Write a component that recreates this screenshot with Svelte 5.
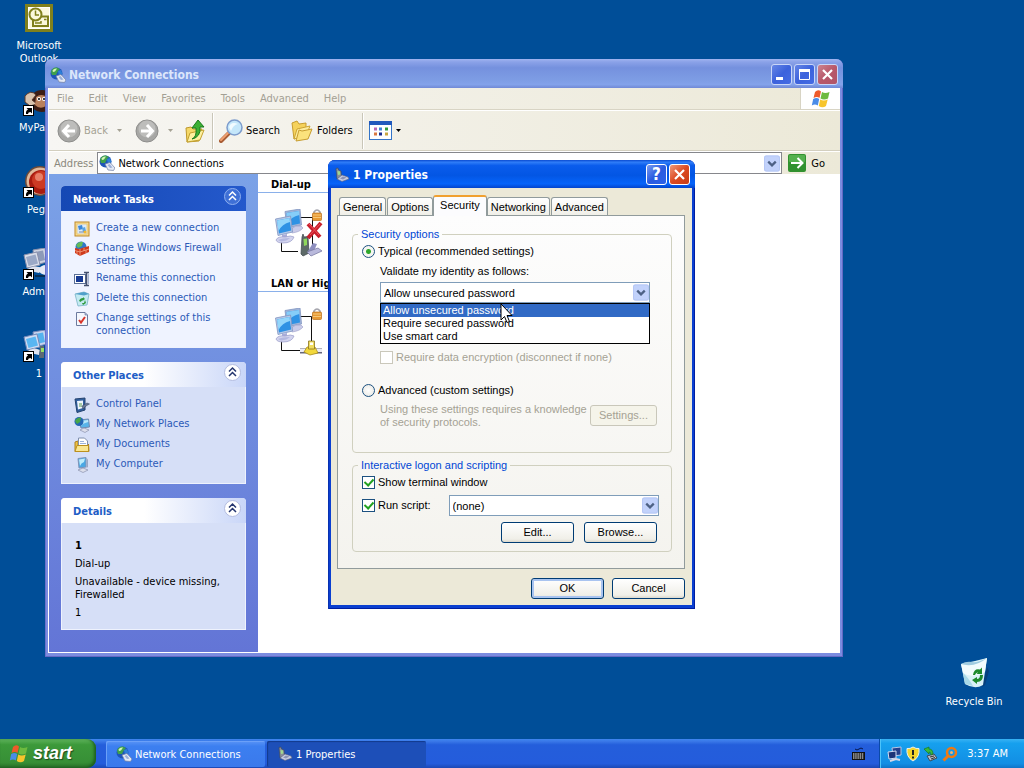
<script>
  const menus = ['File', 'Edit', 'View', 'Favorites', 'Tools', 'Advanced', 'Help'];
  const tasks = [
    { icon: 'create', label: 'Create a new connection' },
    { icon: 'firewall', label: 'Change Windows Firewall settings' },
    { icon: 'rename', label: 'Rename this connection' },
    { icon: 'bin', label: 'Delete this connection' },
    { icon: 'settings', label: 'Change settings of this connection' }
  ];
  const places = [
    { icon: 'control', label: 'Control Panel' },
    { icon: 'netplaces', label: 'My Network Places' },
    { icon: 'documents', label: 'My Documents' },
    { icon: 'computer', label: 'My Computer' }
  ];
  const tabs = ['General', 'Options', 'Security', 'Networking', 'Advanced'];
  const methods = ['Allow unsecured password', 'Require secured password', 'Use smart card'];
  let method = $state(methods[0]);
  let mode = $state('typical');
  let terminal = $state(true);
  let runScript = $state(true);
</script>

{#snippet globe(size)}
  <svg width={size} height={size} viewBox="0 0 16 16" aria-hidden="true">
    <circle cx="6.500" cy="6.500" r="6" fill="#1d55b8" />
    <path d="M1 5Q2 0 7 .5L10 2L8 4L6 8L2 8Z" fill="#3fa04c" />
    <path d="M2.500 3.500Q4 1 7 1.500L5 4.500L3 5Z" fill="#d2f4b4" />
    <path d="M8 4L11 3L12.500 7L9 9Z" fill="#2d7fd8" />
    <path d="M6 9L11 7.500L16 13L14.500 15.500L9 15Z" fill="#e4e9f4" stroke="#6f7da4" stroke-width=".7" />
    <path d="M8.500 10L10.500 9L13.500 12.500L11 13Z" fill="#9aaed8" />
  </svg>
{/snippet}

{#snippet phone()}
  <svg width="16" height="16" viewBox="0 0 16 16" aria-hidden="true">
    <path d="M2 1.500L4 1L4.500 3L7 4L7.500 10L3 12Z" fill="#8a8f98" stroke="#3a4658" stroke-width=".6" />
    <path d="M3.500 4L6 4.500L6.300 7.500L4 8Z" fill="#9fd890" />
    <path d="M3 12L8 8L14 10L15 12L8 14.500Z" fill="#c6cbe0" stroke="#59607e" stroke-width=".6" />
    <path d="M6 11.500L9 9.500L12.500 10.500L9 12.500Z" fill="#8b92b4" />
  </svg>
{/snippet}

{#snippet flag(size)}
  <svg width={size} height={size} viewBox="0 0 20 20" aria-hidden="true">
    <path d="M4 3Q7 0 10 2.500L8.500 9Q6 7 2.500 9Z" fill="#ee5a2a" />
    <path d="M11 3Q14 5 18.500 3L17 9.500Q13 11.500 9.500 9.500Z" fill="#6dba3f" />
    <path d="M2.200 10Q5.500 8 8.200 10L6.800 16.500Q4 14.500 .8 16.500Z" fill="#4a8ce8" />
    <path d="M9.200 10.500Q12.500 12.500 16.700 10.500L15 17Q11.500 19.500 7.800 17Z" fill="#f7c52c" />
  </svg>
{/snippet}

{#snippet chevron()}
  <svg class="chev" viewBox="0 0 17 17" aria-hidden="true">
    <rect width="17" height="17" rx="2" fill="#c2d2fb" />
    <rect x=".5" y=".5" width="16" height="16" rx="2" fill="none" stroke="#b4c6f4" />
    <path d="M4.500 6.500L8.500 10.500L12.500 6.500" fill="none" stroke="#4d6185" stroke-width="2.400" />
  </svg>
{/snippet}

{#snippet screens()}
  <path d="M11 2.500L26 0L27.500 16L13 19Z" fill="#9fb4da" stroke="#8094c0" stroke-width=".8" />
  <path d="M12.500 4L25 2L26 14.500L14 17Z" fill="#2f92e4" />
  <path d="M12.500 4L25 2L25.300 6Q17 8 13.500 14Z" fill="#86cdf8" />
  <path d="M17 20Q21 16 27 17L29 19Q26 23 18 24Z" fill="#c9cbe8" stroke="#9a9cc8" stroke-width=".6" />
  <path d="M1.500 10L16.500 7L18.500 23L4 26.500Z" fill="#b5c8e8" stroke="#8094c0" stroke-width=".8" />
  <path d="M3 11.500L15.500 9L17.200 21.500L5 24.500Z" fill="#2f92e4" />
  <path d="M3 11.500L15.500 9L16 13Q8 15 4.500 22Z" fill="#93d6fb" />
  <path d="M8 26L13 25V29H8Z" fill="#a9addb" />
  <path d="M2 31Q4 27 11 28Q17 26 20 28Q18 34 9 34Q3 34 2 31Z" fill="#d3d4ee" stroke="#9a9cc8" stroke-width=".7" />
  <path d="M4 31Q8 29 16 29Q13 32 7 32.500Z" fill="#b4b8e0" />
{/snippet}

{#snippet lock()}
  <path d="M40 5V3Q43 -1 46 3V5" fill="none" stroke="#a4a4ac" stroke-width="1.600" />
  <rect x="38.500" y="4" width="9" height="7.500" rx="1" fill="#e79a34" stroke="#b9701c" stroke-width=".7" />
  <path d="M39 6H47M39 8.500H47" stroke="#f8c878" />
{/snippet}

{#snippet arrowBadge()}
  <rect x=".5" y="21.500" width="10" height="10" fill="#fff" stroke="#000" />
  <path d="M3 30Q2.500 26.500 5 25.500L3.500 24H9V29.500L7.500 28Q5 28 5 30Z" fill="#000" />
{/snippet}

{#snippet smallIcon(name)}
  <svg class="small" width="16" height="16" viewBox="0 0 16 16" aria-hidden="true">
    {#if name === 'create'}
      <rect x="1" y="1" width="14" height="14" fill="#f6dc94" stroke="#c08a28" />
      <rect x="3" y="3" width="10" height="10" fill="#dceaf8" stroke="#e8b850" stroke-width=".6" />
      <path d="M4 5L8 4L9 8L5 9Z" fill="#3d87d8" /><path d="M8 7L11 6L12 10L9 11Z" fill="#5aa4e4" />
      <path d="M5 11H10" stroke="#7888a8" /><circle cx="11" cy="11" r="1.500" fill="#f4b82c" />
    {:else if name === 'firewall'}
      <circle cx="7" cy="6" r="5.500" fill="#2f78c8" /><path d="M2 4Q5 0 9 1L8 5L4 7Z" fill="#62bb5a" />
      <path d="M1 7L5 8L15 5V11L6 15L1 12Z" fill="#cf3a1c" />
      <path d="M1 9.500L6 11L15 8M6 8V15M10 7V10M12 9V12M3 10V13" stroke="#f8b090" stroke-width=".7" fill="none" />
    {:else if name === 'rename'}
      <rect x=".5" y="3.500" width="11" height="9" fill="#fff" stroke="#5b6f96" /><rect x="2" y="5" width="7" height="6" fill="#173a93" />
      <path d="M10 1.500H15M12.500 1.500V14.500M10 14.500H15" stroke="#44506e" stroke-width="1.600" /><path d="M14.500 3V13" stroke="#a6b3d0" />
    {:else if name === 'bin'}
      <path d="M1 3L10 1L15 3L13 14L4 15Z" fill="#c4eaf2" stroke="#79b2c6" stroke-width=".8" /><path d="M1 3L10 4.500L15 3L10 1Z" fill="#4f9fca" />
      <path d="M5 10Q6 7 9 7L9 6L11 8L9 9.500Q7 9 7 11ZM11 9L12 12L9 14L8 12L10 12Z" fill="#2e9a3e" />
    {:else if name === 'settings'}
      <path d="M2.500 1.500H11L13.500 4V14.500H2.500Z" fill="#f4f7fd" stroke="#6c7a9e" /><path d="M13.500 4H11V1.500" fill="#a9b8da" stroke="#6c7a9e" stroke-width=".7" />
      <path d="M5 9L7 11.500L11 6" fill="none" stroke="#d8342a" stroke-width="2" />
    {:else if name === 'control'}
      <path d="M1 2L11 1V13L3 15.500Z" fill="#315f9e" stroke="#24436f" /><path d="M3 4L9 3.500V11L4 12.500Z" fill="#eef5fc" />
      <path d="M5 7H8M5 9H8" stroke="#5b9a50" /><path d="M8 9L13 6L15.500 7L12 9L9 12Z" fill="#6a7896" stroke="#344562" stroke-width=".5" />
    {:else if name === 'netplaces'}
      <path d="M5 3L14.500 2L15.500 10L7 11Z" fill="#58b4ea" stroke="#7089b0" /><path d="M6 4L14 3L14.300 5Q9 6 7 9Z" fill="#b9e7fa" />
      <circle cx="5" cy="4.500" r="4.500" fill="#2467b4" /><path d="M1 4Q3 0 7 .5L6 5L3 7Z" fill="#46a648" />
      <path d="M6 13L10 11L15 13L11 15.500Z" fill="#dcdfec" stroke="#8a90ae" stroke-width=".7" />
    {:else if name === 'documents'}
      <path d="M1 5L4 4V14H14.500V7L15 14.500H1Z" fill="#edc248" stroke="#b0821c" />
      <path d="M4.500 1H10.500L13.500 4V10H4.500Z" fill="#fff" stroke="#8190ae" /><path d="M6 4.500H10M6 6.500H12" stroke="#9db3da" />
      <path d="M1 14.500L3 8.500H14.500V14.500Z" fill="#fae690" stroke="#bb901e" />
    {:else}
      <path d="M4 1.500L12 .5V10L5 11Z" fill="#4aa8e4" stroke="#7f94b8" /><path d="M5 2.500L11 1.500L10 5Q7 6 6 9Z" fill="#bdecfb" />
      <path d="M12.500 1L14 2.500V10L12.500 11Z" fill="#9aa7c4" /><path d="M4 13L9 11L14 13L9 15.500Z" fill="#dcdfeb" stroke="#8a90ae" stroke-width=".7" />
    {/if}
  </svg>
{/snippet}

{#snippet collapse(title)}
  <button class="collapse" aria-label="Collapse {title}">
    <svg width="19" height="19" viewBox="0 0 19 19" aria-hidden="true">
      <circle class="ring" cx="9.500" cy="9.500" r="8" />
      <path class="arrows" d="M6 8.500L9.500 5L13 8.500M6 13L9.500 9.500L13 13" />
    </svg>
  </button>
{/snippet}

{#snippet closeGlyph()}
  <svg width="13" height="13" viewBox="0 0 13 13" aria-hidden="true"><path d="M2 2L11 11M11 2L2 11" stroke="#fff" stroke-width="2.200" /></svg>
{/snippet}

<div class="screen">
  <main class="desktop">
    <a class="shortcut outlook" href="#outlook">
      <svg width="28" height="28" viewBox="0 0 28 28" aria-hidden="true">
        <rect width="28" height="28" fill="#80801c" /><rect x="3" y="3" width="22" height="22" fill="#fff" />
        <rect x="4" y="4" width="20" height="20" fill="#fbf8dc" />
        <path d="M13 12.500H23V22H8V16" fill="none" stroke="#80801c" stroke-width="2" />
        <circle cx="10.500" cy="10.500" r="6" fill="#fbf8dc" stroke="#80801c" stroke-width="2" /><path d="M10.500 6.500V11H14" stroke="#80801c" stroke-width="1.500" fill="none" />
        <path d="M10 19H16V17M19 15.500H21.500" fill="none" stroke="#80801c" stroke-width="1.500" />
      </svg>
      <span>Microsoft Outlook</span>
    </a>
    <a class="shortcut clipped mypa" href="#mypa">
      <svg width="32" height="32" viewBox="0 0 32 32" aria-hidden="true">
        <ellipse cx="19" cy="17" rx="12" ry="11" fill="#3c1d14" /><path d="M2 12Q8 5 13 11L9 16L14 20L7 22L2 18Z" fill="#d8c3ae" stroke="#5a3a2c" />
        <path d="M13 13Q18 9 24 13L23 22Q17 26 12 21Z" fill="#b9805c" /><circle cx="16" cy="15" r="2" fill="#fff" /><circle cx="21" cy="15" r="2" fill="#fff" /><circle cx="16" cy="15" r="1" /><circle cx="21" cy="15" r="1" />
        {@render arrowBadge()}
      </svg>
      <span>MyPa</span>
    </a>
    <a class="shortcut clipped peg" href="#peg">
      <svg width="32" height="32" viewBox="0 0 32 32" aria-hidden="true">
        <circle cx="17" cy="15" r="15" fill="#6c4a38" /><circle cx="17" cy="15" r="13.500" fill="#e0b89a" /><circle cx="18" cy="16" r="12" fill="#a81c10" />
        <circle cx="18" cy="14" r="9" fill="#cc3a24" /><circle cx="16" cy="11" r="4" fill="#e88068" />
        {@render arrowBadge()}
      </svg>
      <span>Peg</span>
    </a>
    <a class="shortcut clipped adm" href="#adm">
      <svg width="32" height="32" viewBox="0 0 32 32" aria-hidden="true">
        <path d="M10 2L22 0L24 14L12 17Z" fill="#cfd3e0" stroke="#8a90ac" /><path d="M12 4L20 2.500L22 12L14 14Z" fill="#8d9ab8" />
        <path d="M1 7L14 4L17 17L4 20Z" fill="#dadeea" stroke="#8a90ac" /><path d="M3 9L12.500 6.500L15 15.500L5.500 18Z" fill="#9aa8c6" />
        <path d="M3 22Q10 16 20 20L16 25Z" fill="#dfe2ee" /><ellipse cx="23" cy="22" rx="7" ry="5" fill="#e8eaf4" /><path d="M12 28H24V22" fill="none" stroke="#111" />
        {@render arrowBadge()}
      </svg>
      <span>Adm</span>
    </a>
    <a class="shortcut one" href="#one">
      <svg width="32" height="32" viewBox="0 0 32 32" aria-hidden="true">
        <path d="M10 2L22 0L24 14L12 17Z" fill="#c6d4ee" stroke="#7688b8" /><path d="M12 4L20 2.500L22 12L14 14Z" fill="#55b2ee" />
        <path d="M1 7L14 4L17 17L4 20Z" fill="#d0dcf2" stroke="#7688b8" /><path d="M3 9L12.500 6.500L15 15.500L5.500 18Z" fill="#5ab6f2" />
        <path d="M3 22Q10 16 17 20L16 25Z" fill="#dfe2ee" /><path d="M17 16H21V28H16Z" fill="#5d6a74" /><path d="M18 18H21V22H18Z" fill="#9adf62" />
        {@render arrowBadge()}
      </svg>
      <span>1</span>
    </a>
    <a class="shortcut recycle" href="#recycle">
      <svg width="32" height="32" viewBox="0 0 32 32" aria-hidden="true">
        <path d="M24 30L29 10L31 14L27 28Z" fill="#063f7c" />
        <path d="M3 7L17 4L29 1L25 28Q17 33 7 27Z" fill="#d9f1f7" /><path d="M3 7Q13 11 29 1L27 15Q14 22 5 16Z" fill="#f1fbfd" />
        <path d="M3 7Q8 4 14 5Q20 6 29 1Q17 11 3 7Z" fill="#9fcbe0" /><path d="M7 27L5 16Q10 20 15 29Z" fill="#a8d9e8" />
        <path d="M15 18Q16 11 22 12.500L24 10.500V17H18.500L20 15.500Q18 15 17 18ZM25 18Q25 25 19 25V27L14 23L19 20V22Q22 22 22 18Z" fill="#1d8a2c" />
      </svg>
      <span>Recycle Bin</span>
    </a>

    <section class="explorer" aria-label="Network Connections">
      <header class="titlebar">
        {@render globe(16)}
        <h1>Network Connections</h1>
        <button class="cap blue" aria-label="Minimize"><svg width="13" height="13" viewBox="0 0 13 13" aria-hidden="true"><path d="M1 10.500H8" stroke="#fff" stroke-width="3" /></svg></button>
        <button class="cap blue" aria-label="Maximize"><svg width="13" height="13" viewBox="0 0 13 13" aria-hidden="true"><path d="M1.500 2V11.500H11.500V2" stroke="#fff" fill="none" /><path d="M1 2.500H12" stroke="#fff" stroke-width="3" /></svg></button>
        <button class="cap red" aria-label="Close">{@render closeGlyph()}</button>
      </header>
      <div class="client">
        <nav class="menubar">
          {#each menus as m}<button>{m}</button>{/each}
          <span class="brand">{@render flag(20)}</span>
        </nav>
        <div class="toolbar">
          <button class="tool dim">
            <svg width="24" height="24" viewBox="0 0 24 24" aria-hidden="true"><circle cx="12" cy="12" r="11" fill="#a7a7a5" stroke="#8e8e8c" /><circle cx="12" cy="10" r="8.500" fill="#bdbdbb" /><path d="M18 12H7M12 6L6.500 12L12 18" fill="none" stroke="#fff" stroke-width="3" /></svg>
            <span>Back</span>
          </button>
          <button class="drop" aria-label="Back history"><svg width="5" height="3" viewBox="0 0 5 3" aria-hidden="true"><path d="M0 0H5L2.500 3Z" fill="#a5a294" /></svg></button>
          <button class="tool" aria-label="Forward">
            <svg width="24" height="24" viewBox="0 0 24 24" aria-hidden="true"><circle cx="12" cy="12" r="11" fill="#a7a7a5" stroke="#8e8e8c" /><circle cx="12" cy="10" r="8.500" fill="#bdbdbb" /><path d="M6 12H17M12 6L17.500 12L12 18" fill="none" stroke="#fff" stroke-width="3" /></svg>
          </button>
          <button class="drop" aria-label="Forward history"><svg width="5" height="3" viewBox="0 0 5 3" aria-hidden="true"><path d="M0 0H5L2.500 3Z" fill="#a5a294" /></svg></button>
          <button class="tool up" aria-label="Up">
            <svg width="22" height="24" viewBox="0 0 22 24" aria-hidden="true"><path d="M2 9L7 8L9 10H18L15 22L3 23Z" fill="#f5d868" stroke="#bd982a" /><path d="M3 23L6 14L20 11L16 21Z" fill="#fdf0a0" stroke="#c4a232" /><path d="M8 20Q13 18 12 9H8L14 1L20 8H16Q17 18 8 20Z" fill="#3cb034" stroke="#1a7a1c" /></svg>
          </button>
          <i class="sep"></i>
          <button class="tool">
            <svg width="24" height="24" viewBox="0 0 24 24" aria-hidden="true"><path d="M2 22L10 14" stroke="#a85c34" stroke-width="4" stroke-linecap="round" /><path d="M2 21L9 14" stroke="#f0a070" stroke-width="2" stroke-linecap="round" /><circle cx="15.500" cy="8.500" r="7.500" fill="#c5e7fa" stroke="#7d9ccc" stroke-width="1.500" /><path d="M10 8Q12 2 19 5Q14 6 12 12Z" fill="#f2fbff" /></svg>
            <span>Search</span>
          </button>
          <button class="tool folders">
            <svg width="24" height="24" viewBox="0 0 24 24" aria-hidden="true"><path d="M2 4L7 2L9 5L16 4V15L4 20Z" fill="#f5d25c" stroke="#c79d30" /><path d="M4 20L7 10L20 7L16 17Z" fill="#fdec9c" stroke="#cba434" /><path d="M6 22L9 11L12 12L22 10L18 20Z" fill="#fbe27c" stroke="#c79d30" /></svg>
            <span>Folders</span>
          </button>
          <i class="sep"></i>
          <button class="tool" aria-label="Views">
            <svg width="24" height="20" viewBox="0 0 24 20" aria-hidden="true"><rect x=".5" y=".5" width="22" height="18" fill="#fdfeff" stroke="#3374c8" /><path d="M0 0H23V4H0Z" fill="#2058bc" /><path d="M5 8H8" stroke="#b668b4" stroke-width="3" /><path d="M5 13H8" stroke="#d87840" stroke-width="3" /><path d="M10 8H13" stroke="#3c84d8" stroke-width="3" /><path d="M10 13H13" stroke="#182c90" stroke-width="3" /><path d="M16 8H19" stroke="#2f9a3a" stroke-width="3" /><path d="M16 13H19" stroke="#c9a640" stroke-width="3" /></svg>
            <svg width="5" height="3" viewBox="0 0 5 3" aria-hidden="true"><path d="M0 0H5L2.500 3Z" fill="#000" /></svg>
          </button>
        </div>
        <div class="addressbar">
          <label for="address">Address</label>
          <div class="addrbox">
            {@render globe(16)}
            <input id="address" value="Network Connections" />
            {@render chevron()}
          </div>
          <button class="go">
            <svg width="18" height="18" viewBox="0 0 18 18" aria-hidden="true"><rect width="18" height="18" rx="2" fill="#31912f" /><rect x="1" y="1" width="16" height="7" rx="1" fill="#54b04e" /><path d="M3 9H14M9.500 4L14.500 9L9.500 14" stroke="#fff" stroke-width="2" fill="none" /></svg>
            <span>Go</span>
          </button>
        </div>
        <div class="content">
          <aside>
            <section class="box primary">
              <header><h2>Network Tasks</h2>{@render collapse('Network Tasks')}</header>
              <ul>{#each tasks as t}<li><a href="#{t.icon}">{@render smallIcon(t.icon)}<span>{t.label}</span></a></li>{/each}</ul>
            </section>
            <section class="box">
              <header><h2>Other Places</h2>{@render collapse('Other Places')}</header>
              <ul>{#each places as p}<li><a href="#{p.icon}">{@render smallIcon(p.icon)}<span>{p.label}</span></a></li>{/each}</ul>
            </section>
            <section class="box">
              <header><h2>Details</h2>{@render collapse('Details')}</header>
              <div class="details">
                <p><b>1</b></p><p>Dial-up</p><p>Unavailable - device missing, Firewalled</p><p>1</p>
              </div>
            </section>
          </aside>
          <div class="files">
            <h3>Dial-up</h3>
            <div class="conn">
              <svg width="50" height="50" viewBox="0 0 50 50" aria-hidden="true">
                <path d="M26 8.500H38.500V40M7.500 33V42.500H24" stroke="#111" fill="none" />
                {@render screens()}{@render lock()}
                <path d="M28 28L29 25L30 28L34 27.500L35 44L29 47L27 45Z" fill="#5d6a68" stroke="#3a4448" stroke-width=".7" /><path d="M29.500 30L33 29.500V36L30 37Z" fill="#8ed85c" />
                <path d="M34 42L39 34L43 35L40 42Z" fill="#8f90c0" /><path d="M33 43L44 39L48 42L37 47Z" fill="#b9b9dc" stroke="#7c7ca4" stroke-width=".8" />
                <path d="M34 15L46 28M47 14L34 29" stroke="#c8202c" stroke-width="4" /><path d="M35 15L45 26M46 15L36 26" stroke="#f0505a" stroke-width="1" />
              </svg>
            </div>
            <h3>LAN or High-Speed Internet</h3>
            <div class="conn">
              <svg width="50" height="50" viewBox="0 0 50 50" aria-hidden="true">
                <path d="M26 8.500H37.500V34M7.500 33V42.500H26" stroke="#111" fill="none" />
                {@render screens()}{@render lock()}
                <path d="M26 43H48" stroke="#66667a" stroke-width="5" /><path d="M26 42.500H48" stroke="#ececf4" stroke-width="3" />
                <path d="M33 39L41 39L44 45L36 47L30 44Z" fill="#f2d83c" stroke="#a88c18" stroke-width=".8" /><path d="M34.500 33H40.500V41H34.500Z" fill="#f0dc60" stroke="#8a7420" stroke-width=".8" /><path d="M36 34.500H39V37H36Z" fill="#fff" />
              </svg>
            </div>
          </div>
        </div>
      </div>
    </section>

    <section class="dialog" role="dialog" aria-label="1 Properties">
      <header class="titlebar">
        {@render phone()}
        <h1>1 Properties</h1>
        <button class="cap blue help" aria-label="Help"><b>?</b></button>
        <button class="cap red" aria-label="Close">{@render closeGlyph()}</button>
      </header>
      <form class="dlgbody" onsubmit={(e) => e.preventDefault()}>
        <div class="tabs" role="tablist">
          {#each tabs as t}<button type="button" role="tab" aria-selected={t === 'Security'} class:active={t === 'Security'}>{t}</button>{/each}
        </div>
        <div class="panel" role="tabpanel">
          <fieldset class="security">
            <legend>Security options</legend>
            <label class="row"><input type="radio" name="mode" value="typical" bind:group={mode} />Typical (recommended settings)</label>
            <div class="sub">
              <label class="line" for="method">Validate my identity as follows:</label>
              <div class="combo">
                <select id="method" bind:value={method}>{#each methods as m}<option>{m}</option>{/each}</select>
                {@render chevron()}
                <ul class="list" role="listbox" aria-label="Validation methods">
                  {#each methods as m}<li role="option" aria-selected={m === method}>{m}</li>{/each}
                </ul>
              </div>
              <label class="row encrypt"><input type="checkbox" disabled />Require data encryption (disconnect if none)</label>
            </div>
            <label class="row custom"><input type="radio" name="mode" value="advanced" bind:group={mode} />Advanced (custom settings)</label>
            <div class="knowledge">
              <p>Using these settings requires a knowledge of security protocols.</p>
              <button type="button" class="btn" disabled>Settings...</button>
            </div>
          </fieldset>
          <fieldset class="logon">
            <legend>Interactive logon and scripting</legend>
            <label class="row"><input type="checkbox" bind:checked={terminal} />Show terminal window</label>
            <div class="script">
              <label class="row"><input type="checkbox" bind:checked={runScript} />Run script:</label>
              <div class="combo">
                <select aria-label="Script"><option>(none)</option></select>
                {@render chevron()}
              </div>
            </div>
            <div class="actions"><button type="button" class="btn">Edit...</button><button type="button" class="btn">Browse...</button></div>
          </fieldset>
        </div>
        <footer><button class="btn default">OK</button><button type="button" class="btn">Cancel</button></footer>
      </form>
    </section>

    <svg class="pointer" width="13" height="21" viewBox="0 0 13 21" aria-hidden="true"><path d="M1 1V17L4.500 13.500L7 19.500L9.500 18.500L7 12.500H12Z" fill="#fff" stroke="#000" /></svg>
  </main>

  <footer class="taskbar">
    <button class="start">{@render flag(20)}<span>start</span></button>
    <div class="running">
      <button class="task">{@render globe(16)}<span>Network Connections</span></button>
      <button class="task pressed">{@render phone()}<span>1 Properties</span></button>
    </div>
    <button class="kbd" aria-label="Language bar"><svg width="13" height="14" viewBox="0 0 13 14" aria-hidden="true"><path d="M3 2Q5 4 7 2T11 2" fill="none" stroke="#06164a" /><rect y="5" width="13" height="8" fill="#111" /><path d="M1 7H12M1 9H12M1 11H12" stroke="#fff" stroke-dasharray="1.500 .7" /></svg></button>
    <div class="tray">
      <svg width="16" height="16" viewBox="0 0 16 16" aria-hidden="true"><path d="M5 2L14 1V9L6 10Z" fill="#24408c" stroke="#b8c6e4" /><path d="M1 6L9 5V12L2 13Z" fill="#1c3478" stroke="#d2dcf2" /><path d="M3 15L9 13L13 14" stroke="#d8d8e6" stroke-width="2" fill="none" /></svg>
      <svg width="14" height="16" viewBox="0 0 14 16" aria-hidden="true"><path d="M7 1Q10 3 13 2.500Q14 11 7 15Q0 11 1 2.500Q4 3 7 1Z" fill="#f5d52c" stroke="#f0f0e8" /><path d="M7 4V9M7 10.500V12.500" stroke="#222" stroke-width="2" /></svg>
      <svg width="16" height="16" viewBox="0 0 16 16" aria-hidden="true"><path d="M4 10L11 8L14 12L7 15Z" fill="#b8bcc6" stroke="#3a4a58" /><path d="M7 11L11 10M8 13L12 11.500" stroke="#333" /><path d="M1 3L6 1V3Q10 3 10 8L8 9Q8 6 6 6V8Z" fill="#37b83c" stroke="#12701c" stroke-width=".6" /></svg>
      <svg width="16" height="16" viewBox="0 0 16 16" aria-hidden="true"><circle cx="9.500" cy="6.500" r="4.500" fill="none" stroke="#ee7a14" stroke-width="2.500" /><path d="M6 10L1.500 14.500" stroke="#ee7a14" stroke-width="3" /><circle cx="9.500" cy="6.500" r="1.500" fill="#f0b070" /></svg>
      <time>3:37 AM</time>
    </div>
  </footer>
</div>

<style>
  :global(body) { margin: 0; }
  .screen { --ui: "DejaVu Sans Condensed", "Noto Sans", sans-serif; --dlg: "Liberation Sans", Arial, sans-serif;
    display: flex; flex-direction: column; min-height: 100vh; background: #004e98; font: 11px/13px var(--ui); color: #000; overflow: hidden; }
  .screen * { box-sizing: border-box; }
  button, input, select { font: inherit; color: inherit; margin: 0; }
  button { border: 0; background: none; padding: 0; }
  h1, h2, h3, p, ul { margin: 0; padding: 0; }
  ul { list-style: none; }
  a { text-decoration: none; color: inherit; }
  svg { display: block; flex: none; }
  .desktop { position: relative; flex: 1; }

  .shortcut { position: absolute; display: flex; flex-direction: column; align-items: center; gap: 7px; width: 72px; color: #fff; text-align: center; }
  .outlook { left: 3px; top: 4px; }
  .clipped { width: 45px; left: 0; align-items: flex-end; }
  .clipped svg { margin-right: -10px; }
  .mypa { top: 84px; gap: 5px; }
  .peg { top: 166px; gap: 5px; }
  .adm { top: 248px; gap: 5px; }
  .one { left: 3px; top: 330px; gap: 5px; }
  .recycle { right: 14px; top: 657px; gap: 6px; }

  .titlebar { display: flex; align-items: center; gap: 2px; }
  .titlebar h1 { flex: 1; padding-left: 1px; font-size: 12px; line-height: 16px; font-weight: 700; }
  .cap { display: grid; place-items: center; width: 21px; height: 21px; border: 1px solid #fff; border-radius: 3px; }
  .cap.blue { background: linear-gradient(135deg, #7a9bf0, #2a5be0 50%, #2c62e8); }
  .cap.red { background: linear-gradient(135deg, #f09a7c, #dc4a22 50%, #c83c14); }
  .help b { font-size: 17px; line-height: 17px; color: #fff; }

  .explorer { position: absolute; left: 45px; right: 181px; top: 59px; padding: 0 3px 4px; border-radius: 7px 7px 0 0; background: #7b8ce0; box-shadow: inset -1px -1px #6468c4, inset 1px 0 #6a73cd; }
  .explorer > .titlebar { height: 29px; margin: 0 -3px; padding: 2px 5px 0; border-radius: 7px 7px 0 0; background: linear-gradient(#a0b4f0, #8ba2e8 10%, #7591de 30%, #7d9ce4 70%, #83a2ea 88%, #7089d6); color: #dce6fb; }
  .explorer .cap { border-color: #c9d6f8; }
  .explorer .cap.blue { background: linear-gradient(135deg, #6686e6, #3c62dc 50%, #456ce4); }
  .explorer .cap.red { background: linear-gradient(135deg, #cc8490, #b8586a 50%, #b05468); }
  .client { border-left: 1px solid #fff; border-bottom: 1px solid #fff; background: #fff; }
  .menubar { display: flex; align-items: stretch; height: 22px; padding-left: 8px; background: linear-gradient(90deg, #f7f6f3, #ece9d8); color: #a3a094; border-bottom: 1px solid #d8d4c4; gap: 15px; }
  .brand { display: grid; place-items: center; width: 40px; margin-left: auto; background: #fff; border-left: 1px solid #d8d4c4; }
  .toolbar { display: flex; align-items: center; height: 41px; padding: 0 8px; background: linear-gradient(90deg, #f7f6f3, #ece9d8); border-top: 1px solid #fff; border-bottom: 1px solid #d3cfbf; }
  .tool { display: flex; align-items: center; gap: 3px; }
  .dim { color: #a5a294; }
  .drop { padding: 0 13px 0 9px; }
  .up { margin-left: -2px; }
  .sep { width: 1px; height: 36px; margin: 0 6px; background: #c9c6b8; box-shadow: 1px 0 #fff; }
  .folders { margin-left: 10px; }
  .folders + .sep { margin-left: 9px; }
  .addressbar { display: flex; align-items: center; height: 23px; padding-left: 5px; gap: 4px; background: linear-gradient(90deg, #f7f6f3, #ece9d8); border-top: 1px solid #fff; color: #8a887c; }
  .addrbox { display: flex; align-items: center; flex: 1; align-self: stretch; gap: 3px; padding: 0 1px; border: 1px solid #86878c; background: #fff; }
  .addrbox input { flex: 1; min-width: 0; border: 0; padding: 0; background: none; outline: 0; color: #000; }
  .chev { width: 16px; height: 17px; }
  .go { display: flex; align-items: center; gap: 5px; padding: 0 15px 0 2px; color: #000; }
  .content { display: flex; }
  aside { display: flex; flex-direction: column; gap: 14px; width: 209px; padding: 12px 12px 22px; background: linear-gradient(#7ba2e7, #6375d6); }
  .box { color: #2b5ab8; background: #d6dff7; border: 1px solid #eef2fd; border-top: 0; border-radius: 4px 4px 0 0; }
  .box header { display: flex; align-items: center; height: 25px; margin: 0 -1px; padding: 0 4px 0 12px; border-radius: 4px 4px 0 0; background: linear-gradient(90deg, #fff 45%, #c9d6f8); }
  .box h2 { flex: 1; padding-top: 2px; font-size: 11px; line-height: 13px; color: #215dc6; }
  .primary { background: #eff3ff; }
  .primary header { background: linear-gradient(90deg, #1548b4, #2459cc); }
  .primary h2 { color: #fff; }
  .collapse { align-self: flex-start; margin-top: 1px; }
  .ring { fill: #fff; stroke: #b3bce0; }
  .arrows { fill: none; stroke: #25366f; stroke-width: 1.5; }
  .primary .ring { fill: #3f70d6; stroke: #8fb0f0; }
  .primary .arrows { stroke: #fff; }
  .box ul { display: flex; flex-direction: column; gap: 4px; padding: 10px 12px 10px; }
  .box li a { display: flex; gap: 6px; }
  .details { display: flex; flex-direction: column; gap: 5px; padding: 16px 10px 10px 13px; color: #000; }
  .files { flex: 1; min-width: 0; padding-top: 4px; }
  .files h3 { padding: 0 0 1px 13px; width: 300px; max-width: 100%; height: 15px; font-size: 11px; line-height: 13px; white-space: nowrap; border-bottom: 1px solid #8ab0ea; overflow: hidden; }
  .conn { padding: 16px 0 18px 16px; }

  .dialog { position: absolute; left: 328px; top: 160px; width: 367px; padding: 0 3px 4px; border-radius: 7px 7px 0 0; background: #0a3fd0; box-shadow: inset 1px 0 #0831b0, inset -1px -1px #001ea0; font-family: var(--dlg); }
  .dialog > .titlebar { height: 28px; margin: 0 -3px; padding: 1px 5px 0 6px; border-radius: 7px 7px 0 0; color: #fff; font-family: var(--ui); background: linear-gradient(#0a4ad0, #2f7df8 8%, #0a5cec 20%, #0356e4 55%, #0664fa 85%, #0444cc); }
  .dlgbody { padding: 7px 7px 6px 6px; background: #ece9d8; }
  .tabs { display: flex; align-items: flex-end; height: 20px; padding-left: 2px; }
  .tabs button { height: 18px; margin-right: 1px; padding: 1px 3px 0; border: 1px solid #919b9c; border-bottom: 0; border-radius: 3px 3px 0 0; background: linear-gradient(#fff, #f0efe8); }
  .tabs .active { position: relative; z-index: 1; height: 21px; margin: 0 0 -1px -1px; padding: 0 6px 3px; border-top: 2px solid #f0a030; background: #fcfcfe; }
  .panel { display: flex; flex-direction: column; gap: 5px; padding: 11px 12px 16px 14px; border: 1px solid #919b9c; background: linear-gradient(#fdfdfd, #f4f3ee); }
  fieldset { min-width: 0; margin: 0; padding: 0 12px 0 9px; border: 1px solid #d0d0bf; border-radius: 4px; }
  legend { margin-left: -4px; padding: 0 3px; line-height: 14px; color: #0046d5; }
  .row { display: flex; align-items: center; gap: 3px; height: 14px; }
  .row input { appearance: none; flex: none; width: 13px; height: 13px; border: 1px solid #1c5180; background: #fff; }
  .row input[type="radio"] { border-radius: 50%; background: radial-gradient(#fff, #e6e6e0); }
  .row input[type="radio"]:checked { background: radial-gradient(circle, #2fa82c 0 2px, #f6f6f2 3px); }
  .row input[type="checkbox"]:checked { display: grid; place-items: center; }
  .row input[type="checkbox"]:checked::before { content: ""; width: 4px; height: 7px; margin-top: -2px; border: solid #21a121; border-width: 0 2px 2px 0; transform: rotate(42deg); }
  .row input:disabled { border-color: #cac8bb; }
  .security { height: 226px; padding-top: 3px; }
  .sub { padding: 6px 9px 0 18px; }
  .line { display: block; line-height: 14px; }
  .combo { position: relative; height: 21px; }
  .combo select { width: 100%; height: 100%; appearance: none; padding: 1px 20px 0 3px; border: 1px solid #7f9db9; border-radius: 0; background: #fff; outline: 0; }
  .combo .chev { position: absolute; right: 1px; top: 2px; pointer-events: none; }
  .sub .combo { margin-top: 4px; }
  .list { position: absolute; z-index: 2; left: 0; right: 0; top: 21px; border: 1px solid #000; background: #fff; }
  .list li { padding-left: 2px; line-height: 13px; }
  .list [aria-selected="true"] { background: #316ac5; color: #fff; }
  .encrypt { margin-top: 47px; color: #a5a294; }
  .custom { margin-top: 19px; }
  .knowledge { display: flex; align-items: flex-start; justify-content: space-between; padding: 6px 2px 0 18px; color: #a5a294; }
  .knowledge p { width: 209px; }
  .knowledge .btn { width: 67px; margin-top: 2px; }
  .btn { flex: none; width: 73px; height: 21px; border: 1px solid #003c74; border-radius: 3px; background: linear-gradient(#fff, #f0efe8 85%, #dcd8cc); }
  .btn:disabled { border-color: #c9c7ba; background: #f5f4ea; }
  .btn.default { box-shadow: inset 0 0 0 2px #a9c4f0; }
  .logon { padding-top: 3px; padding-bottom: 8px; }
  .script { display: flex; align-items: center; gap: 18px; margin-top: 6px; }
  .script .combo { flex: 1; }
  .actions, footer { display: flex; justify-content: flex-end; }
  .actions { gap: 10px; margin: 6px 2px 0 0; }
  .dlgbody footer { gap: 8px; padding-top: 9px; }
  .pointer { position: absolute; z-index: 5; left: 500px; top: 303px; }

  .taskbar { display: flex; height: 29px; background: linear-gradient(#3f86f0, #3a78e8 8%, #245edb 20%, #245cdc 85%, #1c48b4); color: #fff; }
  .start { display: flex; align-items: center; gap: 4px; width: 96px; padding-left: 9px; border-radius: 0 9px 9px 0; background: linear-gradient(#5fb35c, #3c993a 20%, #378f36 80%, #2a742a); box-shadow: inset -2px -1px 3px #1d5f20; color: #fff; text-shadow: 1px 1px 1px #1d4a1d; font: italic 700 18px/20px "Liberation Sans", sans-serif; }
  .start span { margin-top: -2px; }
  .running { display: flex; flex: 1; gap: 2px; padding: 2px 0 1px 10px; }
  .task { display: flex; align-items: center; gap: 3px; width: 159px; padding-left: 10px; border-radius: 2px; background: linear-gradient(#5a94f6, #3c7ff0 20%, #3a79ec); box-shadow: inset 1px 1px #6ba0f8; }
  .pressed { background: #1d4fb8; box-shadow: inset 1px 1px 1px #133a8c; }
  .kbd { margin-right: 14px; }
  .tray { display: flex; align-items: center; gap: 3px; padding: 0 16px 0 7px; border-left: 1px solid #0a4aa8; background: linear-gradient(#38b2f4, #16a0ee 15%, #128ee4 85%, #0f74c8); box-shadow: inset 1px 0 #4cc4fa; }
  .tray time { margin-left: 6px; }
</style>
